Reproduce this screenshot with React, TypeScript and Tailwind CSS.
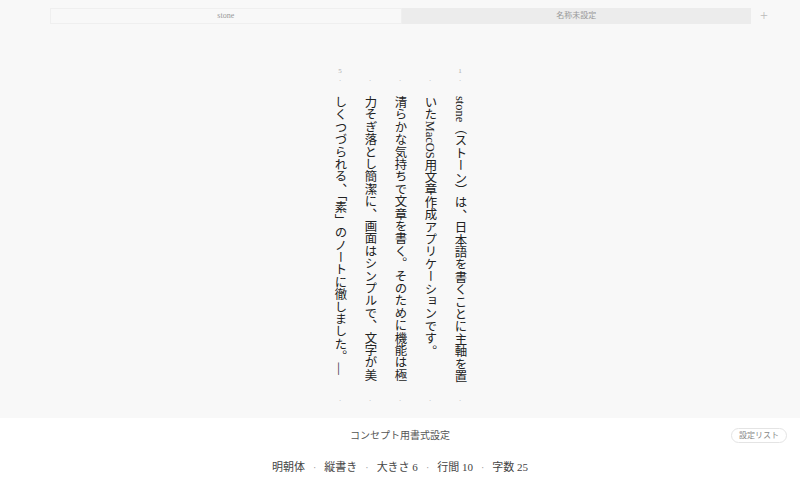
const columns = [
  { no: '1', text: 'stone（ストーン）は、日本語を書くことに主軸を置' },
  { no: '', text: 'いたMacOS用文章作成アプリケーションです。' },
  { no: '', text: '清らかな気持ちで文章を書く。そのために機能は極' },
  { no: '', text: '力そぎ落とし簡潔に、画面はシンプルで、文字が美' },
  { no: '5', text: 'しくつづられる、「素」のノートに徹しました。—' },
];

const specs = ['明朝体', '縦書き', '大きさ 6', '行間 10', '字数 25'];

const serif = "font-['Liberation_Serif','Noto_Sans_CJK_JP',serif]";

export default function App() {
  return (
    <div className={`w-[800px] h-[500px] flex flex-col bg-white ${serif}`}>
      <div className="h-[418px] bg-[#f8f8f8] flex flex-col">
        {/* tabs */}
        <div className="flex items-center pt-2 pl-[50px] pr-[28px]">
          <div className="flex-1 h-4 flex items-center justify-center border border-[#efefef] text-[8px] text-[#999]">stone</div>
          <div className="flex-1 h-4 flex items-center justify-center bg-[#ececec] text-[8px] text-[#999]">名称未設定</div>
          <div className="ml-[5px] w-[16px] text-center text-[14px] font-light leading-none text-[#bbb]">+</div>
        </div>

        {/* vertical page */}
        <div className="flex flex-row-reverse justify-center mt-[42px]">
          {columns.map((c, i) => (
            <div key={i} className="w-[30px] flex flex-col items-center text-[#222]">
              <div className="h-[10px] text-[7px] leading-[10px] text-[#aaa]">{c.no}</div>
              <div className="h-[10px] text-[8px] leading-[10px] text-[#bbb]">·</div>
              <div className="h-[310px] pt-[10px]">
                <div className="[writing-mode:vertical-rl] text-[12.4px] leading-[30px] whitespace-nowrap">
                  {c.text}
                </div>
              </div>
              <div className="h-[10px] text-[8px] leading-[10px] text-[#bbb]">·</div>
            </div>
          ))}
        </div>
      </div>

      {/* settings panel */}
      <div className="flex-1 relative flex flex-col items-center">
        <div className="mt-[10px] text-[10px] text-[#555]">コンセプト用書式設定</div>
        <div className="mt-[16px] flex items-center gap-[8px] text-[11px] text-[#444]">
          {specs.map((s, i) => (
            <div key={i} className="flex items-center gap-[8px]">
              {i > 0 && <span className="text-[#999] text-[10px]">·</span>}
              <span>{s}</span>
            </div>
          ))}
        </div>
        <div className="absolute right-[13px] top-[10px] h-[15px] px-[7px] flex items-center rounded-full border border-[#e4e4e4] text-[8px] text-[#888]">
          設定リスト
        </div>
      </div>
    </div>
  );
}
